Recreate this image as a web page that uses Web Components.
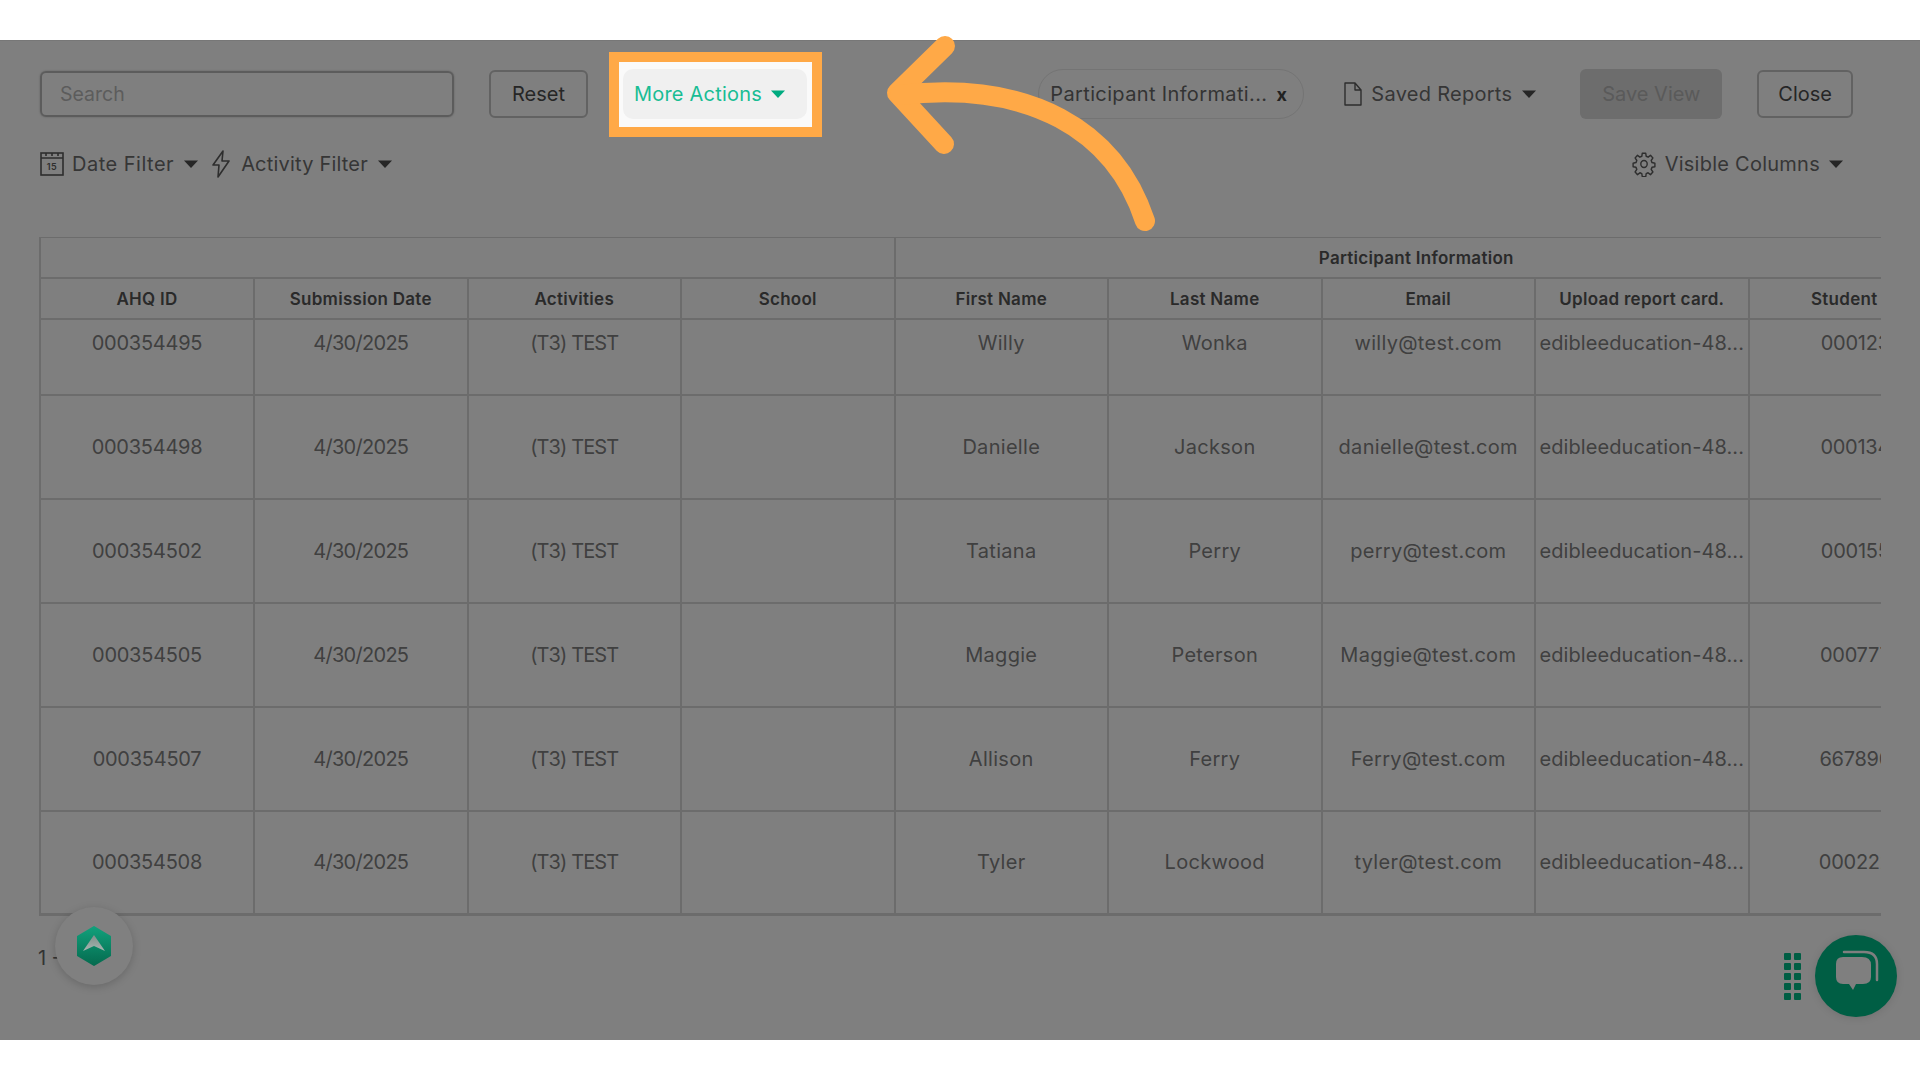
<!DOCTYPE html>
<html lang="en">
<head>
<meta charset="utf-8">
<title>Reports</title>
<style>
  html, body { margin: 0; background: #fff; }
  body { font-family: Inter, "Liberation Sans", sans-serif; height: 1080px; overflow: hidden; }
</style>
</head>
<body>
<report-page>
  <div slot="top-left" style="display:contents">
    <search-box></search-box>
    <outline-button style="margin-left:35px">Reset</outline-button>
    <more-actions style="margin-left:35px">More Actions</more-actions>
  </div>
  <div slot="top-right" style="display:contents">
    <view-chip>Participant Informati...</view-chip>
    <menu-link icon="file" style="margin-left:39px;letter-spacing:.28px;--icon-gap:8px">Saved Reports</menu-link>
    <save-button style="margin-left:44px">Save View</save-button>
    <outline-button style="margin-left:35px;padding:0 19px">Close</outline-button>
  </div>
  <div slot="filters" style="display:contents">
    <menu-link icon="calendar" style="letter-spacing:.5px;--icon-gap:8px">Date Filter</menu-link>
    <menu-link icon="bolt" style="margin-left:13px;letter-spacing:.2px">Activity Filter</menu-link>
    <menu-link icon="gear" style="margin-left:auto;margin-right:38px;letter-spacing:.25px;--icon-gap:9px;--caret-gap:9px">Visible Columns</menu-link>
  </div>
</report-page>
<callout-arrow></callout-arrow>
<help-launcher></help-launcher>
<chat-launcher></chat-launcher>

<script>
const CARET = `<svg width="14" height="8" viewBox="0 0 14 8"><path d="M0 0.5h14L7 8z" fill="currentColor"/></svg>`;

const ICONS = {
  calendar: `<svg width="24" height="24" viewBox="0 0 24 24" fill="none" stroke="#2e2e2e" stroke-width="1.6">
      <rect x="1" y="1" width="22" height="22"/><path d="M1 6h22M6 1v3M12 1v3M18 1v3"/>
      <text x="12" y="18" font-size="9" font-weight="600" text-anchor="middle" fill="#2e2e2e" stroke="none">15</text></svg>`,
  bolt: `<svg width="20" height="28" viewBox="0 0 20 28" fill="none" stroke="#2e2e2e" stroke-width="1.6" stroke-linejoin="round">
      <path d="M12 1 2 15h6L7 27 18 11h-7z"/></svg>`,
  file: `<svg width="20" height="24" viewBox="0 0 20 24" fill="none" stroke="#2e2e2e" stroke-width="1.4" stroke-linejoin="round">
      <path d="M2 1h10l6 7v15H2zM12 1v7h6"/></svg>`,
  gear: `<svg width="24" height="26" viewBox="0 0 24 24" preserveAspectRatio="none" fill="none" stroke="#2e2e2e" stroke-width="1.4" stroke-linejoin="round">
      <circle cx="12" cy="12" r="3.2"/>
      <path d="M10.3 2h3.4l.5 2.9 1.9.8 2.4-1.7 2.4 2.4-1.7 2.4.8 1.9 2.9.5v3.4l-2.9.5-.8 1.9 1.7 2.4-2.4 2.4-2.4-1.7-1.9.8-.5 2.9h-3.4l-.5-2.9-1.9-.8-2.4 1.7-2.4-2.4 1.7-2.4-.8-1.9-2.9-.5v-3.4l2.9-.5.8-1.9-1.7-2.4 2.4-2.4 2.4 1.7 1.9-.8z"/></svg>`
};

class ReportPage extends HTMLElement {
  constructor() {
    super();
    this.attachShadow({ mode: 'open' });
  }

  connectedCallback() {
    this.shadowRoot.innerHTML = `
      <style>
        :host {
          display: block;
          box-sizing: border-box;
          margin-top: 40px;
          height: 1000px;
          padding: 28px 39px 0 40px;
          background: #7f7f7f;
          border-top: 1px solid #777;
          overflow: hidden;
        }
        .top { display: flex; align-items: center; height: 50px; }
        .right { display: flex; align-items: center; margin-left: auto; margin-right: 28px; }
        .left { display: flex; align-items: center; }
        .filters { display: flex; align-items: center; height: 34px; margin-top: 28px; }
        report-table { margin: 56px 0 0 -1px; }
        .count { margin: 30px 0 0 -2px; font-size: 20px; color: #333; line-height: 24px; }
      </style>
      <div class="top">
        <div class="left"><slot name="top-left"></slot></div>
        <div class="right"><slot name="top-right"></slot></div>
      </div>
      <div class="filters"><slot name="filters"></slot></div>
      <report-table></report-table>
      <div class="count">1 -</div>
    `;
  }
}

class SearchBox extends HTMLElement {
  constructor() {
    super();
    this.attachShadow({ mode: 'open' });
  }

  connectedCallback() {
    this.shadowRoot.innerHTML = `
      <style>
        :host {
          display: flex;
          align-items: center;
          box-sizing: border-box;
          width: 414px;
          height: 46px;
          padding: 0 18px;
          border: 2px solid #5c5c5c;
          border-radius: 6px;
          box-shadow: 0 0 2px rgba(0, 0, 0, 0.25);
          font-size: 19.5px;
          color: #5c5c5c;
        }
      </style>
      Search
    `;
  }
}

class OutlineButton extends HTMLElement {
  constructor() {
    super();
    this.attachShadow({ mode: 'open' });
  }

  connectedCallback() {
    this.shadowRoot.innerHTML = `
      <style>
        :host {
          display: flex;
          align-items: center;
          justify-content: center;
          box-sizing: border-box;
          height: 48px;
          padding: 0 21px;
          border: 2px solid #626262;
          border-radius: 6px;
          font-size: 20px;
          color: #262626;
        }
      </style>
      <slot></slot>
    `;
  }
}

class MoreActions extends HTMLElement {
  constructor() {
    super();
    this.attachShadow({ mode: 'open' });
  }

  connectedCallback() {
    this.shadowRoot.innerHTML = `
      <style>
        :host {
          display: flex;
          position: relative;
          align-items: center;
          gap: 9px;
          box-sizing: border-box;
          width: 184px;
          height: 50px;
          padding: 0 0 0 11px;
          font-size: 20px;
          letter-spacing: .2px;
          color: #19bd94;
        }
        .mark {
          position: absolute;
          inset: -17px -15px -18px -14px;
          border: 10px solid #ffa947;
          background: #fafafa;
        }
        .button {
          position: absolute;
          inset: 0;
          background: #f0f0f0;
          border-radius: 10px;
        }
        .label, svg { position: relative; }
        svg { color: #00ab80; }
      </style>
      <span class="mark"></span>
      <span class="button"></span>
      <span class="label"><slot></slot></span>
      ${CARET}
    `;
  }
}

class ViewChip extends HTMLElement {
  constructor() {
    super();
    this.attachShadow({ mode: 'open' });
  }

  connectedCallback() {
    this.shadowRoot.innerHTML = `
      <style>
        :host {
          display: flex;
          align-items: center;
          box-sizing: border-box;
          width: 266px;
          height: 50px;
          padding: 0 10px 0 11px;
          border: 1px solid #747474;
          border-radius: 25px;
          font-size: 20px;
          letter-spacing: .36px;
          color: #333;
          white-space: nowrap;
        }
        .x { margin-left: auto; margin-right: 6px; font-size: 18px; font-weight: 700; color: #222; }
      </style>
      <slot></slot><span class="x">x</span>
    `;
  }
}

class MenuLink extends HTMLElement {
  constructor() {
    super();
    this.attachShadow({ mode: 'open' });
  }

  connectedCallback() {
    const icon = ICONS[this.getAttribute('icon')] || '';
    this.shadowRoot.innerHTML = `
      <style>
        :host {
          display: inline-flex;
          align-items: center;
          font-size: 20px;
          color: #363636;
          white-space: nowrap;
        }
        svg { display: block; flex: none; }
        .text { margin: 0 var(--caret-gap, 10px) 0 var(--icon-gap, 10px); }
        .caret { color: #262626; }
      </style>
      ${icon}
      <span class="text"><slot></slot></span>
      <span class="caret">${CARET}</span>
    `;
  }
}

class SaveButton extends HTMLElement {
  constructor() {
    super();
    this.attachShadow({ mode: 'open' });
  }

  connectedCallback() {
    this.shadowRoot.innerHTML = `
      <style>
        :host {
          display: flex;
          align-items: center;
          justify-content: center;
          width: 142px;
          height: 50px;
          border-radius: 6px;
          background: #6d6d6d;
          font-size: 20px;
          color: #5a5a5a;
        }
      </style>
      <slot></slot>
    `;
  }
}

class ReportTable extends HTMLElement {
  constructor() {
    super();
    this.attachShadow({ mode: 'open' });
  }

  connectedCallback() {
    const columns = ['AHQ ID', 'Submission Date', 'Activities', 'School', 'First Name', 'Last Name', 'Email', 'Upload report card.', 'Student ID'];
    const rows = [
      ['000354495', 'Willy', 'Wonka', 'willy@test.com', '000123'],
      ['000354498', 'Danielle', 'Jackson', 'danielle@test.com', '000134'],
      ['000354502', 'Tatiana', 'Perry', 'perry@test.com', '000155'],
      ['000354505', 'Maggie', 'Peterson', 'Maggie@test.com', '000777'],
      ['000354507', 'Allison', 'Ferry', 'Ferry@test.com', '667890'],
      ['000354508', 'Tyler', 'Lockwood', 'tyler@test.com', '000222']
    ];
    const body = rows.map(([id, first, last, email, student]) => `
      <tr>
        <td class="id">${id}</td><td class="date">4/30/2025</td><td class="act">(T3) TEST</td><td></td>
        <td>${first}</td><td>${last}</td><td>${email}</td>
        <td class="file">edibleeducation-48...</td><td class="id">${student}</td>
      </tr>`).join('');
    this.shadowRoot.innerHTML = `
      <style>
        :host { display: block; width: 1842px; overflow: hidden; }
        table {
          width: 1922px;
          table-layout: fixed;
          border-collapse: collapse;
          font-size: 20px;
          color: #404040;
          text-align: center;
        }
        col { width: 213.5px; }
        col:first-child { width: 214px; }
        th, td { box-sizing: border-box; border: 2px solid #6c6c6c; padding: 0; white-space: nowrap; overflow: hidden; }
        th { font-size: 17px; font-weight: 600; letter-spacing: .28px; color: #2a2a2a; padding-top: 2px; }
        .group { height: 40px; }
        .group th { border-top-width: 1px; }
        .group .named { padding-right: 24px; }
        .heads { height: 41px; }
        td { height: 104px; letter-spacing: .3px; }
        td.id { letter-spacing: -.25px; }
        td.date { letter-spacing: -.7px; }
        td.act { letter-spacing: -.9px; }
        td.file { letter-spacing: .1px; }
        tbody tr:first-child td { height: 76px; padding-bottom: 28px; }
        tbody tr:last-child td { border-bottom-width: 3px; }
      </style>
      <table>
        <colgroup>${columns.map(() => '<col>').join('')}</colgroup>
        <thead>
          <tr class="group"><th colspan="4"></th><th class="named" colspan="5">Participant Information</th></tr>
          <tr class="heads">${columns.map(c => `<th>${c}</th>`).join('')}</tr>
        </thead>
        <tbody>${body}</tbody>
      </table>
    `;
  }
}

class CalloutArrow extends HTMLElement {
  constructor() {
    super();
    this.attachShadow({ mode: 'open' });
  }

  connectedCallback() {
    this.shadowRoot.innerHTML = `
      <style>
        :host { position: absolute; left: 880px; top: 30px; width: 290px; height: 210px; }
        svg { display: block; }
      </style>
      <svg width="290" height="210" viewBox="880 30 290 210" fill="none" stroke="#ffa947" stroke-width="20" stroke-linecap="round" stroke-linejoin="round">
        <path d="M945 46 897 93l47 51"/>
        <path d="M900 95C1030 80 1115 130 1145 221"/>
      </svg>
    `;
  }
}

class HelpLauncher extends HTMLElement {
  constructor() {
    super();
    this.attachShadow({ mode: 'open' });
  }

  connectedCallback() {
    this.shadowRoot.innerHTML = `
      <style>
        :host {
          position: absolute;
          left: 55px;
          top: 907px;
          width: 78px;
          height: 78px;
          display: flex;
          align-items: center;
          justify-content: center;
          border-radius: 50%;
          background: #808080;
          box-shadow: 0 2px 8px rgba(0, 0, 0, 0.18);
        }
      </style>
      <svg width="36" height="40" viewBox="0 0 36 40">
        <defs>
          <linearGradient id="hex" x1="0" y1="0" x2="0" y2="1"><stop offset="0" stop-color="#11a07b"/><stop offset="1" stop-color="#056b4f"/></linearGradient>
          <linearGradient id="tip" x1="0" y1="0" x2="0" y2="1"><stop offset="0" stop-color="#7f8f8a"/><stop offset="1" stop-color="#a6b5b0"/></linearGradient>
        </defs>
        <path d="M18 1 34 10.5v19L18 39 2 29.5v-19z" fill="url(#hex)" stroke="url(#hex)" stroke-width="2" stroke-linejoin="round"/>
        <path d="M18 9 29 25 18 20 7 25z" fill="url(#tip)"/>
      </svg>
    `;
  }
}

class ChatLauncher extends HTMLElement {
  constructor() {
    super();
    this.attachShadow({ mode: 'open' });
  }

  connectedCallback() {
    const dots = Array.from({ length: 10 }, () => '<i></i>').join('');
    this.shadowRoot.innerHTML = `
      <style>
        :host {
          position: absolute;
          left: 1784px;
          top: 935px;
          display: flex;
          align-items: center;
          gap: 14px;
        }
        .dots { display: grid; grid-template-columns: 7px 7px; gap: 3px; }
        .dots i { height: 7px; border-radius: 1px; background: #005e44; }
        .bubble {
          width: 82px;
          height: 82px;
          border-radius: 50%;
          background: #005e44;
          box-shadow: 0 1px 8px rgba(0, 0, 0, 0.12);
        }
        svg { display: block; }
      </style>
      <div class="dots">${dots}</div>
      <div class="bubble">
        <svg width="82" height="82" viewBox="0 0 82 82">
          <path d="M21 29q0-7 7-7h19q9 0 9 8v12q0 7-8 7H41l-3 6-4-6h-6q-7 0-7-7z" fill="#7f7f7f"/>
          <path d="M29 17h20q13 0 13 12v16" fill="none" stroke="#7f7f7f" stroke-width="2.5" stroke-linecap="round"/>
        </svg>
      </div>
    `;
  }
}

customElements.define('report-page', ReportPage);
customElements.define('search-box', SearchBox);
customElements.define('outline-button', OutlineButton);
customElements.define('more-actions', MoreActions);
customElements.define('view-chip', ViewChip);
customElements.define('menu-link', MenuLink);
customElements.define('save-button', SaveButton);
customElements.define('report-table', ReportTable);
customElements.define('callout-arrow', CalloutArrow);
customElements.define('help-launcher', HelpLauncher);
customElements.define('chat-launcher', ChatLauncher);
</script>
</body>
</html>
